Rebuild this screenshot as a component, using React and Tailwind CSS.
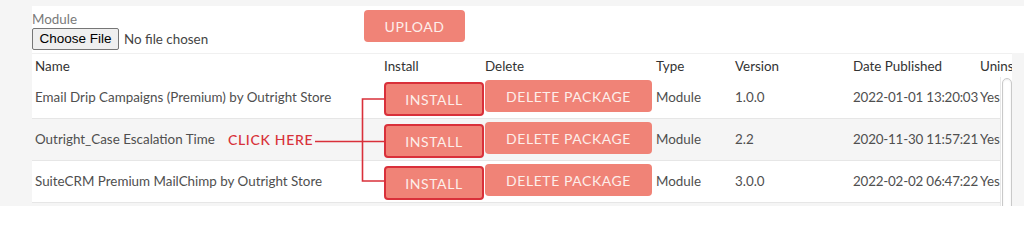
import React from "react";

const rows = [
  { name: "Email Drip Campaigns (Premium) by Outright Store", version: "1.0.0", date: "2022-01-01 13:20:03", bg: "bg-white" },
  { name: "Outright_Case Escalation Time", version: "2.2", date: "2020-11-30 11:57:21", bg: "bg-[#f5f5f5]", note: true },
  { name: "SuiteCRM Premium MailChimp by Outright Store", version: "3.0.0", date: "2022-02-02 06:47:22", bg: "bg-white" },
];

const cols = "grid grid-cols-[352px_101px_171px_79px_118px_127px_32px]";

export default function App() {
  return (
    <div className="w-[1024px] h-[206px] overflow-hidden bg-[#f5f5f5] pt-[6px] pl-[32px]" style={{ fontFamily: "Lato, 'Noto Sans', sans-serif" }}>
      {/* Upload form */}
      <div className="h-[47px] bg-white flex">
        <div className="w-[332px] pt-[4px]">
          <div className="text-[13.4px] leading-[18px] text-[#7a7a7a]">Module</div>
          <div className="flex items-center">
            <button className="h-[22px] w-[87px] rounded-[2px] border border-[#767676] bg-[#efefef] text-[13.5px] text-black" style={{ fontFamily: "'Liberation Sans', Arial, sans-serif" }}>
              Choose File
            </button>
            <span className="ml-[5px] text-[13.4px] text-[#444]">No file chosen</span>
          </div>
        </div>
        <button className="mt-[4px] h-[32px] w-[101px] rounded-[4px] bg-[#f08377] text-[14px] tracking-[0.04em] text-[#fdeeea]">UPLOAD</button>
      </div>

      {/* Packages table */}
      <div className="w-[980px]">
        <div className={`${cols} h-[24px] items-center bg-white border-t border-[#f0f0f0] pt-px text-[13.4px] text-[#333] whitespace-nowrap overflow-hidden`}>
          <div className="pl-[3px]">Name</div>
          <div>Install</div>
          <div>Delete</div>
          <div>Type</div>
          <div>Version</div>
          <div>Date Published</div>
          <div className="overflow-hidden">Uninstallable</div>
        </div>

        <div className="flex">
          <div className="relative w-[968px] overflow-hidden">
            {rows.map((r) => (
              <div key={r.name} className={`${cols} h-[42px] ${r.bg} border-b border-[#e6e6e6] text-[13.4px] text-[#4f4f4f] whitespace-nowrap`}>
                <div className="flex items-center pl-[3px]">
                  <span>{r.name}</span>
                  {r.note && <span className="ml-[13px] text-[14px] font-medium tracking-[0.05em] text-[#d8323a]">CLICK HERE</span>}
                </div>
                <div className="pt-[5px]">
                  <button className="h-[34px] w-[100px] rounded-[4px] border-2 border-[#d9303a] bg-[#f08377] text-[14px] tracking-[0.04em] text-[#fdeeea]">INSTALL</button>
                </div>
                <div className="pt-[3px]">
                  <button className="h-[32px] w-[167px] rounded-[4px] bg-[#f08377] text-[14px] tracking-[0.04em] text-[#fdeeea]">DELETE PACKAGE</button>
                </div>
                <div className="flex items-center">Module</div>
                <div className="flex items-center">{r.version}</div>
                <div className="flex items-center tracking-[-0.2px]">{r.date}</div>
                <div className="flex items-center overflow-hidden">Yes</div>
              </div>
            ))}
            {/* annotation lines */}
            <svg className="absolute left-0 top-0 pointer-events-none" width="968" height="130">
              <g stroke="#d9303a" strokeWidth="1.6" fill="none">
                <path d="M352 22 H330.5 V104 H352" />
                <path d="M283 64.5 H352" />
              </g>
            </svg>
          </div>
          <div className="w-[12px] bg-white border-l border-[#e8e8e8] pl-px pt-px">
            <div className="h-[140px] w-[10px] rounded-t-full border border-[#c9c9c9] bg-white shadow-[inset_0_1px_2px_rgba(0,0,0,0.08)]"></div>
          </div>
        </div>
      </div>
    </div>
  );
}
